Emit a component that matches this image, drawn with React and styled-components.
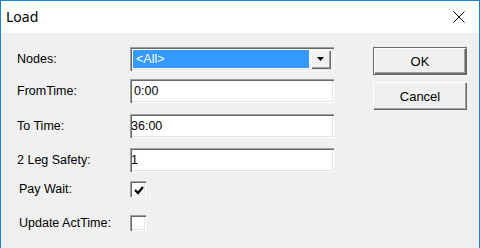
import styled, { createGlobalStyle } from 'styled-components'

const GlobalStyle = createGlobalStyle`
    html, body {
        margin: 0;
        padding: 0;
        background: #ffffff;
    }
`

const sunken = `
    box-shadow:
        inset 1px 1px 0 #a0a0a0,
        inset 2px 2px 0 #696969,
        inset -1px -1px 0 #ffffff,
        inset -2px -2px 0 #e3e3e3;
`

const App = () => {
  return (
    <>
      <GlobalStyle />
      <Window>
        <TitleBar>
          <Title>Load</Title>
          <CloseButton>
            <svg width="12" height="12" viewBox="0 0 12 12">
              <path d="M0.5 0.5 L11.5 11.5 M11.5 0.5 L0.5 11.5" stroke="#000" strokeWidth="1" />
            </svg>
          </CloseButton>
        </TitleBar>
        <Body>
          <Form>
            <Row $top={14}>
              <Label>Nodes:</Label>
              <Combo>
                <Selected>&lt;All&gt;</Selected>
                <DropButton>
                  <svg width="7" height="4" viewBox="0 0 7 4">
                    <path d="M0 0 H7 L3.5 4 Z" fill="#000" />
                  </svg>
                </DropButton>
              </Combo>
            </Row>
            <Row $top={8}>
              <Label>FromTime:</Label>
              <TextBox>0:00</TextBox>
            </Row>
            <Row $top={11}>
              <Label>To Time:</Label>
              <TextBox $pad={1}>36:00</TextBox>
            </Row>
            <Row $top={10}>
              <Label>2 Leg Safety:</Label>
              <TextBox $pad={1}>1</TextBox>
            </Row>
            <Row $top={9} $h={16}>
              <Label $indent={2}>Pay Wait:</Label>
              <CheckBox>
                <svg width="10" height="9" viewBox="0 0 10 9">
                  <path d="M1 4 L4 7 L9 1" stroke="#000" strokeWidth="2.2" fill="none" />
                </svg>
              </CheckBox>
            </Row>
            <Row $top={18} $h={16}>
              <Label $indent={2}>Update ActTime:</Label>
              <CheckBox />
            </Row>
          </Form>
          <Buttons>
            <Button $default>OK</Button>
            <Button>Cancel</Button>
          </Buttons>
        </Body>
      </Window>
    </>
  )
}

export default App;

const Window = styled.div`
    width: 480px;
    height: 248px;
    box-sizing: border-box;
    border: 1px solid #1883d7;
    border-bottom: none;
    background: #f0f0f0;
    display: flex;
    flex-direction: column;
    overflow: hidden;
`

const TitleBar = styled.div`
    height: 32px;
    background: #ffffff;
    display: flex;
    align-items: center;
    justify-content: space-between;
    padding: 0 14px 0 5px;
`

const Title = styled.div`
    font-family: "Noto Sans", sans-serif;
    font-size: 14px;
    color: #000;
    margin-top: -1px;
`

const CloseButton = styled.div`
    width: 12px;
    height: 12px;
    display: flex;
`

const Body = styled.div`
    flex: 1;
    display: flex;
    font-family: "Liberation Sans", Arial, sans-serif;
    font-size: 12.5px;
    color: #000;
`

const Form = styled.div`
    display: flex;
    flex-direction: column;
    padding-left: 16px;
`

const Row = styled.div`
    display: flex;
    align-items: center;
    margin-top: ${p => p.$top}px;
    height: ${p => p.$h || 24}px;
`

const Label = styled.div`
    width: ${p => 113 - (p.$indent || 0)}px;
    padding-left: ${p => p.$indent || 0}px;
    white-space: nowrap;
`

const Combo = styled.div`
    width: 204px;
    height: 24px;
    box-sizing: border-box;
    padding: 3px;
    background: #ffffff;
    ${sunken}
    display: flex;
`

const Selected = styled.div`
    flex: 1;
    background: #3399ff;
    color: #ffffff;
    display: flex;
    align-items: center;
    padding-left: 3px;
`

const DropButton = styled.div`
    width: 21px;
    margin: -1px 0 -1px 1px;
    background: #f0f0f0;
    box-shadow:
        inset 1px 1px 0 #f0f0f0,
        inset 2px 2px 0 #ffffff,
        inset -1px -1px 0 #696969,
        inset -2px -2px 0 #a0a0a0;
    display: flex;
    align-items: center;
    justify-content: center;
`

const TextBox = styled.div`
    width: 204px;
    height: 24px;
    box-sizing: border-box;
    background: #ffffff;
    ${sunken}
    display: flex;
    align-items: center;
    padding-left: ${p => (p.$pad || 4)}px;
`

const CheckBox = styled.div`
    width: 16px;
    height: 16px;
    box-sizing: border-box;
    background: #ffffff;
    ${sunken}
    display: flex;
    align-items: center;
    justify-content: center;
    padding: 2px 0 0 1px;
`

const Buttons = styled.div`
    display: flex;
    flex-direction: column;
    gap: 7px;
    padding: 14px 0 0 39px;
`

const Button = styled.div`
    width: 94px;
    height: 28px;
    box-sizing: border-box;
    display: flex;
    align-items: center;
    justify-content: center;
    font-family: "Liberation Sans", Arial, sans-serif;
    font-size: 13px;
    background: #f0f0f0;
    box-shadow: ${p => p.$default
        ? 'inset 1px 1px 0 #696969, inset -1px -1px 0 #696969, inset 2px 2px 0 #ffffff, inset -2px -2px 0 #696969, inset -3px -3px 0 #a0a0a0'
        : 'inset 1px 1px 0 #ffffff, inset -1px -1px 0 #696969, inset -2px -2px 0 #a0a0a0'};
`
